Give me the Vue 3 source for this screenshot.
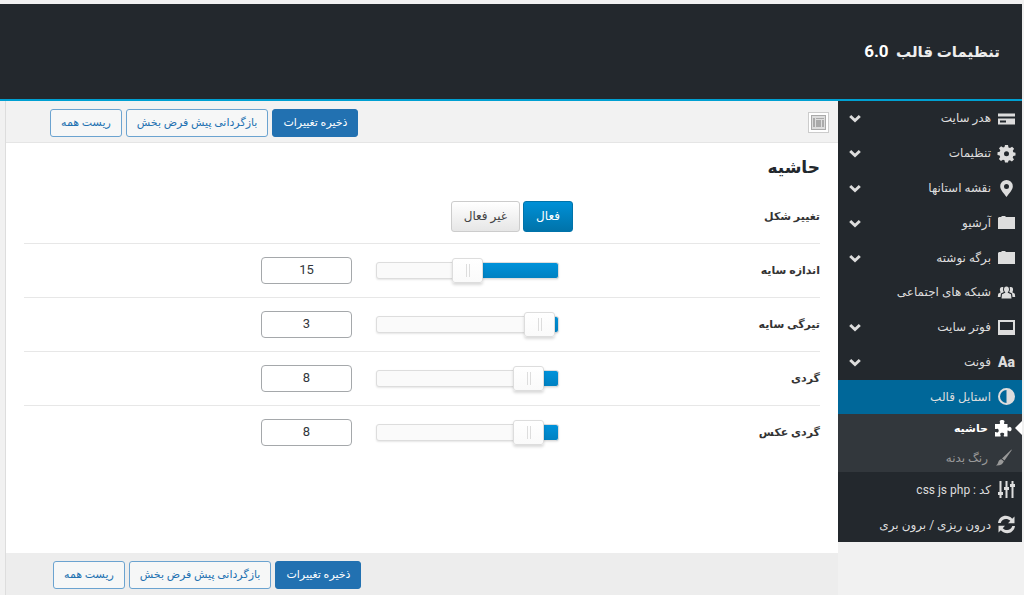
<script setup>
import { reactive, ref } from 'vue'

const menu = [
  { text: 'هدر سایت', icon: 'card', more: true },
  { text: 'تنظیمات', icon: 'gear', more: true },
  { text: 'نقشه استانها', icon: 'pin', more: true },
  { text: 'آرشیو', icon: 'folder', more: true },
  { text: 'برگه نوشته', icon: 'folder', more: true },
  { text: 'شبکه های اجتماعی', icon: 'group' },
  { text: 'فوتر سایت', icon: 'screen', more: true },
  { text: 'فونت', icon: 'font', more: true },
  {
    text: 'استایل قالب', icon: 'contrast', active: true,
    children: [
      { text: 'حاشیه', icon: 'puzzle', current: true },
      { text: 'رنگ بدنه', icon: 'brush' },
    ],
  },
  { text: 'کد : css js php', icon: 'sliders' },
  { text: 'درون ریزی / برون بری', icon: 'refresh' },
]

const icons = {
  card: 'M0 3.500h17v3H0zM0 8.500h17v6H0zM2 10.500v2h6v-2z',
  gear: 'M7 0h3l.5 2.400 1.500.6L14.100 1.700l2 2.100-1.300 2 .5 1.400 2.200.5v2.800l-2.200.5-.6 1.500 1.300 2.100-2.100 2-2-1.300-1.500.5L10 17.500H7l-.5-2.200-1.500-.6-2.100 1.300-2-2.100 1.300-2-.6-1.500L-.5 10V7.200l2.200-.5.6-1.500L1 3.200l2.100-2 2 1.300L6.500 2zM8.500 6.200a2.500 2.500 0 1 0 0 5 2.500 2.500 0 0 0 0-5z',
  pin: 'M8.500 0a6.300 6.300 0 0 0-6.300 6.300C2.200 10 6 13.500 8.500 17c2.500-3.500 6.300-7 6.300-10.700A6.300 6.300 0 0 0 8.500 0zm0 4a2.500 2.500 0 1 1 0 5 2.500 2.500 0 0 1 0-5z',
  folder: 'M0 4l1-1h2l1-1h3l1 1h9v12H0z',
  group: 'M8.500 2.500c1.700 0 2.500 1.200 2.500 2.700 0 1.300-.5 2.300-1.200 2.900v.7l3.200 1.500.5 4.200h-10l.5-4.200 3.200-1.500v-.7C6.500 7.500 6 6.500 6 5.200c0-1.500.8-2.700 2.500-2.700zM4 3c.6 0 1 .1 1.400.4-.6 1.600-.4 3.300.5 4.700L3 9.600 2.500 13H-.2l.4-3.300L2.700 8.300C1.300 6.200 1.800 3 4 3zM13 3c-.6 0-1 .1-1.400.4.6 1.600.4 3.300-.5 4.700L14 9.600l.5 3.400h2.700l-.4-3.300-2.500-1.400C15.700 6.200 15.200 3 13 3z',
  screen: 'M0 1h17v15H0zM2 3v8h13V3z',
  contrast: 'M8.500 0a8.500 8.500 0 1 0 0 17 8.500 8.500 0 0 0 0-17zM8.500 2a6.500 6.500 0 0 0 0 13z',
  puzzle: 'M0 4h4.600C6 3 4.200 2.300 4.800 1.100 5.400-.3 8.800-.3 9.400 1.100 10 2.300 8.200 3 9.400 4H12.500v3.400c1 1 1.500-.8 2.600-.5 2 .5 2 3.800 0 4.300-1.100.3-1.600-1.400-2.600-.5V16.500H9c-1-.9.500-1.500.2-2.700-.4-1.400-3.600-1.400-4 0-.3 1.200 1.200 1.800.2 2.700H0v-4.200c.8-1 1.500.5 2.600.1 1.500-.5 1.500-3.200 0-3.700C1.500 8.300.8 9.700 0 8.800z',
  brush: 'M16.500.5l.3.500L9.500 11.500 7 9.500zM6.300 10.200l2.500 2c-.8 3-3.500 4.500-7.800 4.300 2-1.200 1.800-2.400 2.600-4.200.5-1.200 1.400-1.900 2.700-2.100z',
  sliders: 'M1.500 0h2v11H5v3H3.500v3h-2v-3H0v-3h1.500zM7.500 0h2v6H11v3H9.500v8h-2V9H6V6h1.500zM13.500 0h2v3H17v3h-1.500v11h-2V6H12V3h1.500z',
  refresh: 'M0 7C1.200-.8 9.500-2.200 14.200 2.700L16.500.5V7.200H10l2.300-2.400C9 1.500 4 2.700 2.700 7zM17 10c-1.200 7.800-9.500 9.200-14.200 4.300L.5 16.500V9.800H7l-2.300 2.400C8 15.500 13 14.300 14.300 10z',
}

const enabled = ref(true)
const settings = reactive([
  { id: 'shadow-size', label: 'اندازه سایه', value: 15, min: 0, max: 30 },
  { id: 'shadow-dark', label: 'تیرگی سایه', value: 3, min: 1, max: 100 },
  { id: 'radius', label: 'گردی', value: 8, min: 0, max: 85 },
  { id: 'image-radius', label: 'گردی عکس', value: 8, min: 0, max: 85 },
])
const fill = (s) => ({ '--fill': ((s.value - s.min) / (s.max - s.min)) * 100 + '%' })
</script>

<template>
  <div class="page" dir="rtl">
    <header class="header">
      <h1>تنظیمات قالب&nbsp; <span class="version">6.0</span></h1>
    </header>
    <div class="body">
      <nav class="side">
        <ul class="menu">
          <template v-for="item in menu" :key="item.text">
            <li :class="{ active: item.active }">
              <a href="#">
                <span v-if="item.icon === 'font'" class="aa" aria-hidden="true">Aa</span>
                <svg v-else class="icon" viewBox="0 0 17 17" aria-hidden="true">
                  <path :d="icons[item.icon]" fill-rule="evenodd" />
                </svg>
                <span class="name">{{ item.text }}</span>
                <svg v-if="item.more" class="chevron" viewBox="0 0 12 8" aria-hidden="true">
                  <path d="M1.200 2L6 6.500 10.800 2" />
                </svg>
              </a>
            </li>
            <li v-if="item.children" class="sub">
              <ul>
                <li v-for="c in item.children" :key="c.text" :class="{ current: c.current }">
                  <a href="#">
                    <svg class="icon" viewBox="0 0 17 17" aria-hidden="true">
                      <path :d="icons[c.icon]" fill-rule="evenodd" />
                    </svg>
                    <span class="name">{{ c.text }}</span>
                  </a>
                </li>
              </ul>
            </li>
          </template>
        </ul>
      </nav>

      <main class="panel">
        <div class="bar top">
          <button class="expand" type="button" aria-label="نمایش همه">
            <svg viewBox="0 0 15 15" aria-hidden="true">
              <rect x=".5" y=".5" width="14" height="14" fill="#ddd" stroke="#aaa" />
              <path d="M2 3h2v9H2zM5 3h8v1H5zM5 5h5v7H5zM11 5h2v7h-2z" fill="#aaa" />
            </svg>
          </button>
          <div class="actions">
            <button class="btn primary" type="button">ذخیره تغییرات</button>
            <button class="btn" type="button">بازگردانی پیش فرض بخش</button>
            <button class="btn" type="button">ریست همه</button>
          </div>
        </div>

        <section class="content">
          <h2>حاشیه</h2>
          <div class="row">
            <span id="shape" class="label">تغییر شکل</span>
            <div class="switch" role="group" aria-labelledby="shape">
              <button type="button" :class="{ on: enabled }" @click="enabled = true">فعال</button>
              <button type="button" :class="{ on: !enabled }" @click="enabled = false">غیر فعال</button>
            </div>
          </div>
          <div v-for="s in settings" :key="s.id" class="row">
            <label class="label" :for="s.id">{{ s.label }}</label>
            <input
              v-model.number="s.value" class="range" type="range" :min="s.min" :max="s.max"
              :style="fill(s)" :aria-label="s.label"
            />
            <input :id="s.id" v-model.number="s.value" class="number" type="text" />
          </div>
        </section>

        <div class="bar bottom">
          <div class="actions">
            <button class="btn primary" type="button">ذخیره تغییرات</button>
            <button class="btn" type="button">بازگردانی پیش فرض بخش</button>
            <button class="btn" type="button">ریست همه</button>
          </div>
        </div>
      </main>
    </div>
  </div>
</template>

<style>
body {
  background: #f1f1f1;
}
</style>

<style scoped>
.page,
.page * {
  box-sizing: border-box;
}
.page {
  display: flex;
  flex-direction: column;
  min-height: 100vh;
  padding: 4px 2px 0 0;
  font: 12px/20px Roboto, "DejaVu Sans", sans-serif;
  color: #333;
}
button,
input {
  font: inherit;
}
ul {
  list-style: none;
  margin: 0;
  padding: 0;
}
.header {
  display: flex;
  align-items: center;
  height: 97px;
  padding: 0 22px;
  background: #23282d;
  border-bottom: 2px solid #00a0d2;
}
h1 {
  margin: 0;
  font-size: 15px;
  line-height: 24px;
  color: #eee;
}
.version {
  font-size: 17px;
  color: #fff;
}
.body {
  flex: 1;
  display: flex;
}
.side {
  flex: 0 0 184px;
}
.menu {
  display: flex;
  flex-direction: column;
  min-height: 441px;
  background: #23282d;
}
.menu > li {
  flex: 1 1 34px;
  display: flex;
}
.menu > .sub {
  flex: 0 0 auto;
  display: block;
  background: #32373c;
}
a {
  flex: 1;
  display: flex;
  align-items: center;
  padding: 0 7px 0 11px;
  color: #ddd;
  text-decoration: none;
}
.name {
  flex: 1;
  margin-right: 7px;
}
.icon {
  width: 17px;
  height: 17px;
  fill: currentColor;
  overflow: visible;
}
.aa {
  width: 17px;
  font-size: 14px;
  font-weight: 900;
  direction: ltr;
}
.chevron {
  width: 12px;
  height: 8px;
  fill: none;
  stroke: currentColor;
  stroke-width: 3;
  overflow: visible;
}
.active {
  background: #006799;
}
.sub li {
  display: flex;
  height: 29px;
  position: relative;
}
.sub a {
  padding-right: 10px;
  color: #999;
}
.sub .current a {
  color: #fff;
  font-size: 11px;
  font-weight: 700;
}
.current::after {
  content: "";
  position: absolute;
  top: 7px;
  right: 0;
  border: 7px solid transparent;
  border-left: 0;
  border-right: 7px solid #fff;
}
.panel {
  flex: 1;
  display: flex;
  flex-direction: column;
  margin-left: 5px;
  background: #fff;
  border-left: 1px solid #ddd;
}
.bar {
  display: flex;
  align-items: center;
  background: #f2f2f2;
}
.top {
  height: 42px;
  padding: 2px 9px 0 44px;
  border-bottom: 1px solid #e5e5e5;
}
.bottom {
  height: 42px;
  padding: 2px 9px 0 47px;
  background: #ededed;
}
.expand {
  display: flex;
  padding: 2px;
  background: #fff;
  border: 1px solid #ccc;
}
.expand svg {
  width: 15px;
  height: 15px;
}
.actions {
  display: flex;
  gap: 4px;
  margin-right: auto;
}
.btn {
  height: 28px;
  padding: 0 10px;
  font-size: 11px;
  line-height: 24px;
  color: #2271b1;
  white-space: nowrap;
  background: #f6f7f7;
  border: 1px solid #6ba3d0;
  border-radius: 3px;
}
.btn.primary {
  color: #fff;
  background: #2271b1;
  border-color: #2271b1;
}
.content {
  flex: 1;
  padding: 11px 18px 0;
}
h2 {
  margin: 0 0 10px;
  font-size: 17px;
  line-height: 26px;
  color: #23282d;
}
.row {
  display: flex;
  align-items: center;
  height: 54px;
  border-bottom: 1px solid #e7e7e7;
}
.row:last-child {
  border-color: transparent;
}
.label {
  flex: 0 0 247px;
  font-size: 11px;
  font-weight: 700;
}
.switch {
  display: flex;
  gap: 3px;
}
.switch button {
  height: 31px;
  padding: 0 12px 2px;
  color: #444;
  background: linear-gradient(#fff, #e6e6e6);
  border: 1px solid #ccc;
  border-radius: 3px;
}
.switch .on {
  color: #fff;
  background: linear-gradient(#0090d6, #0073aa);
  border-color: #0073aa;
}
.range {
  appearance: none;
  width: 183px;
  height: 25px;
  margin: 0 14px 0 24px;
  background: none;
}
.range::-webkit-slider-runnable-track {
  height: 17px;
  background:
    linear-gradient(#0093dc, #0080c0) right / var(--fill) 100% no-repeat border-box,
    #fafafa;
  border: 1px solid #ddd;
  border-radius: 3px;
  box-shadow: 0 1px 2px #0000001a;
}
.range::-webkit-slider-thumb {
  appearance: none;
  width: 31px;
  height: 25px;
  margin-top: -5px;
  background:
    linear-gradient(#ddd, #ddd) 13px center / 1px 13px no-repeat,
    linear-gradient(#ddd, #ddd) 16px center / 1px 13px no-repeat,
    linear-gradient(#fff, #fafafa);
  border: 1px solid #ddd;
  border-radius: 3px;
  box-shadow: 0 2px 3px #00000026;
}
.number {
  width: 91px;
  height: 27px;
  padding: 0 8px 2px;
  font-size: 13px;
  text-align: center;
  color: #32373c;
  background: #fff;
  border: 1px solid #a5a8ab;
  border-radius: 4px;
}
</style>
